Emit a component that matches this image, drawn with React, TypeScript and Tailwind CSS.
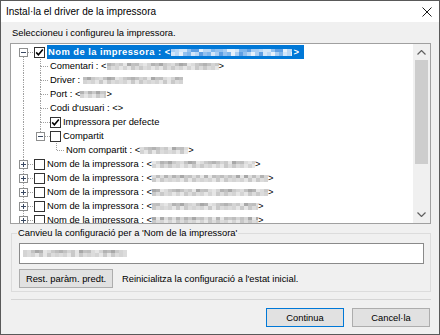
import React from 'react';

const GREY = ['#c9c9c9', '#b3b3b3', '#dcdcdc', '#a8a8a8', '#d4d4d4', '#bebebe', '#e6e6e6', '#c2c2c2'];
const BLUE = ['#7fb6ec', '#a8cdf3', '#d2e6f9', '#5f9fe3', '#b9d7f5', '#93c1ef', '#e6f1fb'];

function Mosaic({ w, blue, seed = 1 }: { w: number; blue?: boolean; seed?: number }) {
  const pal = blue ? BLUE : GREY;
  const n = Math.ceil(w / 4);
  const top = Array.from({ length: n }, (_, i) => pal[(i * 5 + seed * 3 + ((i * i + seed) % 3)) % pal.length]);
  const bot = Array.from({ length: n }, (_, i) => pal[(i * 3 + seed * 7 + ((i * 7 + seed) % 4)) % pal.length]);
  return (
    <span className="inline-flex flex-col h-[7px] overflow-hidden shrink-0" style={{ width: w }}>
      <span className="flex h-[3px]">
        {top.map((c, i) => (
          <span key={i} className="h-full w-[4px] shrink-0" style={{ backgroundColor: c }} />
        ))}
      </span>
      <span className="flex h-[4px]">
        {bot.map((c, i) => (
          <span key={i} className="h-full w-[4px] shrink-0" style={{ backgroundColor: c }} />
        ))}
      </span>
    </span>
  );
}

type CellProps = { w: number; x: number; top?: boolean; bottom?: boolean; h?: number; exp?: '+' | '-' };

function Cell({ w, x, top, bottom, h, exp }: CellProps) {
  const L = x - 4;
  const lc = '#a0a0a0';
  return (
    <svg width={w} height={14} className="block shrink-0">
      {top && <line x1={x + 0.5} y1={0} x2={x + 0.5} y2={exp ? 3 : 8} stroke={lc} strokeDasharray="1 1" />}
      {bottom && <line x1={x + 0.5} y1={exp ? 12 : 7} x2={x + 0.5} y2={14} stroke={lc} strokeDasharray="1 1" />}
      {h !== undefined && (
        <line x1={exp ? L + 9 : x + 1} y1={7.5} x2={h} y2={7.5} stroke={lc} strokeDasharray="1 1" />
      )}
      {exp && (
        <>
          <rect x={L + 0.5} y={3.5} width={8} height={8} fill="#fff" stroke="#8e8f8f" />
          <line x1={L + 2} y1={7.5} x2={L + 7} y2={7.5} stroke="#3b4a63" />
          {exp === '+' && <line x1={x + 0.5} y1={5} x2={x + 0.5} y2={10} stroke="#3b4a63" />}
        </>
      )}
    </svg>
  );
}

function Check({ checked }: { checked?: boolean }) {
  return (
    <svg width={11} height={11} className="block shrink-0">
      <rect x={0.5} y={0.5} width={10} height={10} fill="#fff" stroke="#333333" />
      {checked && <path d="M2.2 5.4 L4.4 7.7 L8.8 2.6" fill="none" stroke="#000" strokeWidth={1.6} />}
    </svg>
  );
}

function Row({ children }: { children: React.ReactNode }) {
  return <div className="flex h-[14px] items-center whitespace-nowrap">{children}</div>;
}

function RootRow({ w, seed }: { w: number; seed: number }) {
  return (
    <Row>
      <Cell w={23} x={12} top bottom exp="+" h={23} />
      <Check />
      <span className="ml-[2px] flex items-center">
        Nom de la impressora :&nbsp;&lt;
        <Mosaic w={w} seed={seed} />
        &gt;
      </span>
    </Row>
  );
}

function Chevron({ down }: { down?: boolean }) {
  return (
    <svg width={9} height={5} className="block">
      <polyline
        points={down ? '0.5,0.5 4.5,4.5 8.5,0.5' : '0.5,4.5 4.5,0.5 8.5,4.5'}
        fill="none"
        stroke="#606060"
        strokeWidth={1.2}
      />
    </svg>
  );
}

export default function App() {
  return (
    <div className="w-[440px] h-[335px] border border-[#595959] bg-[#f0f0f0] flex flex-col overflow-hidden text-[9.4px] leading-[14px] text-black font-['Liberation_Sans',Arial,sans-serif]">
      <div className="h-[21px] shrink-0 bg-white flex items-center justify-between pl-[5px] pr-[7px]">
        <span className="text-[10px]">Instal·la el driver de la impressora</span>
        <svg width={10} height={10} className="block">
          <line x1={0.5} y1={0.5} x2={9.5} y2={9.5} stroke="#1a1a1a" />
          <line x1={9.5} y1={0.5} x2={0.5} y2={9.5} stroke="#1a1a1a" />
        </svg>
      </div>

      <div className="flex-1 flex flex-col pl-[9px] pr-[8px]">
        <div className="mt-[4px] h-[14px] pl-[2px]">Seleccioneu i configureu la impressora.</div>

        <div className="mt-[3px] h-[181px] shrink-0 border border-[#a0a0a0] bg-white flex">
          <div className="flex-1 overflow-hidden pt-[1px]">
            <Row>
              <Cell w={23} x={12} bottom exp="-" h={23} />
              <Check checked />
              <span className="ml-[2px] h-[14px] flex items-center bg-[#0078d7] text-white font-bold tracking-[0.45px] pl-[1px] pr-[4px]">
                Nom de la impressora :&nbsp;&lt;
                <Mosaic w={121} blue seed={2} />
                <span className="ml-[2px]">&gt;</span>
              </span>
            </Row>
            <Row>
              <Cell w={23} x={12} top bottom />
              <Cell w={16} x={6} top bottom h={14} />
              <span className="flex items-center">
                Comentari :&nbsp;&lt;
                <Mosaic w={112} seed={3} />
                &gt;
              </span>
            </Row>
            <Row>
              <Cell w={23} x={12} top bottom />
              <Cell w={16} x={6} top bottom h={14} />
              <span className="flex items-center">
                Driver :&nbsp;
                <Mosaic w={100} seed={4} />
              </span>
            </Row>
            <Row>
              <Cell w={23} x={12} top bottom />
              <Cell w={16} x={6} top bottom h={14} />
              <span className="flex items-center">
                Port :&nbsp;&lt;
                <Mosaic w={26} seed={5} />
                &gt;
              </span>
            </Row>
            <Row>
              <Cell w={23} x={12} top bottom />
              <Cell w={16} x={6} top bottom h={14} />
              <span>Codi d'usuari : &lt;&gt;</span>
            </Row>
            <Row>
              <Cell w={23} x={12} top bottom />
              <Cell w={16} x={6} top bottom h={16} />
              <Check checked />
              <span className="ml-[2px]">Impressora per defecte</span>
            </Row>
            <Row>
              <Cell w={23} x={12} top bottom />
              <Cell w={16} x={6} top exp="-" h={16} />
              <Check />
              <span className="ml-[2px]">Compartit</span>
            </Row>
            <Row>
              <Cell w={23} x={12} top bottom />
              <div className="w-[16px] shrink-0" />
              <Cell w={16} x={6} top h={14} />
              <span className="flex items-center">
                Nom compartit :&nbsp;&lt;
                <Mosaic w={48} seed={6} />
                &gt;
              </span>
            </Row>
            <RootRow w={103} seed={7} />
            <RootRow w={116} seed={8} />
            <RootRow w={116} seed={9} />
            <RootRow w={106} seed={10} />
            <RootRow w={106} seed={11} />
          </div>
          <div className="w-[17px] shrink-0 bg-[#f0f0f0] flex flex-col">
            <div className="h-[16px] flex items-center justify-center">
              <Chevron />
            </div>
            <div className="h-[104px] mx-[2px] bg-[#cdcdcd]" />
            <div className="flex-1" />
            <div className="h-[17px] flex items-center justify-center">
              <Chevron down />
            </div>
          </div>
        </div>

        <fieldset className="mt-[2px] ml-[1px] border border-[#dcdcdc] pl-[5px] pr-[6px] pb-[3px] min-w-0">
          <legend className="px-[1px] leading-[14px]">Canvieu la configuració per a 'Nom de la impressora'</legend>
          <div className="mt-[3px] ml-[2px] h-[21px] w-[405px] border border-[#8a8a8a] bg-white flex items-center pl-[3px]">
            <Mosaic w={104} seed={12} />
          </div>
          <div className="mt-[5px] ml-[2px] flex items-center">
            <div className="h-[19px] w-[94px] border border-[#adadad] bg-[#e1e1e1] flex items-center justify-center">
              Rest. paràm. predt.
            </div>
            <span className="ml-[9px]">Reinicialitza la configuració a l'estat inicial.</span>
          </div>
        </fieldset>

        <div className="mt-[7px] ml-[1px] h-px bg-[#d5d5d5]" />

        <div className="mt-[8px] flex justify-end gap-[8px] pr-[1px]">
          <div className="h-[19px] w-[78px] border border-[#0078d7] bg-[#e1e1e1] flex items-center justify-center">
            Continua
          </div>
          <div className="h-[19px] w-[78px] border border-[#adadad] bg-[#e1e1e1] flex items-center justify-center">
            Cancel·la
          </div>
        </div>
      </div>
    </div>
  );
}
